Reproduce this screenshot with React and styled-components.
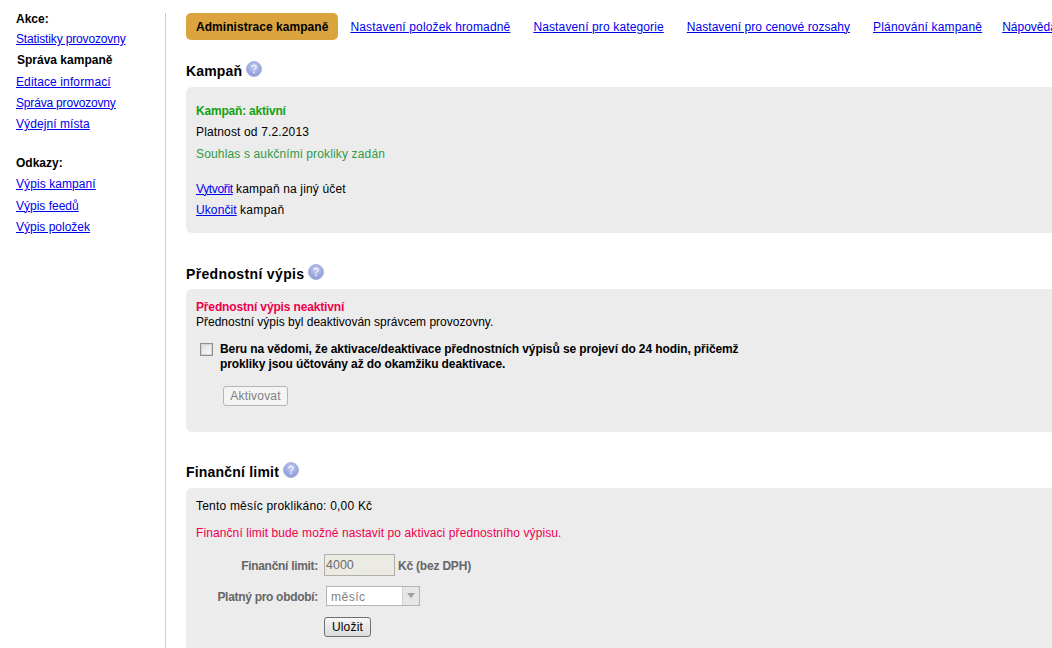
import React from "react";
import styled, { createGlobalStyle } from "styled-components";

const Global = createGlobalStyle`
  html, body { margin: 0; padding: 0; background: #fff; height: 648px; overflow: hidden; }
  body { font-family: "Liberation Sans", Arial, sans-serif; font-size: 12px; color: #000; }
  a { color: #0000ee; text-decoration: underline; }
`;

const track = (p) => `letter-spacing: ${p.$track || 0}px;`;

const Page = styled.div`
  display: flex;
  width: 1052px;
  height: 648px;
  overflow: hidden;
`;
const Sidebar = styled.aside`
  width: 149px;
  flex: none;
  margin-top: 13px;
  padding-left: 16px;
  border-right: 1px solid #f0c88c;
`;
const SideGroup = styled.div`
  margin-bottom: 22px;
`;
const SideTitle = styled.div`
  font-weight: bold;
  line-height: 21.2px;
  height: 21.2px;
  margin-top: ${(p) => p.$top || 0}px;
  margin-bottom: ${(p) => p.$bottom || 0}px;
  padding-left: ${(p) => (p.$current ? "1px" : "0")};
`;
const SideLink = styled.a`
  display: block;
  line-height: 21.2px;
  height: 21.2px;
  white-space: nowrap;
  width: max-content;
  ${track}
`;
const Main = styled.main`
  flex: 1;
  min-width: 0;
  padding: 13px 0 0 20px;
`;
const Tabs = styled.nav`
  display: flex;
  align-items: center;
  height: 27px;
  white-space: nowrap;
`;
const ActiveTab = styled.div`
  height: 27px;
  line-height: 28px;
  padding: 0 10px;
  background: #dba43f;
  border-radius: 5px;
  font-weight: bold;
  letter-spacing: 0.05px;
  margin-right: 12px;
`;
const Tab = styled.a`
  margin-right: ${(p) => p.$gap || 23}px;
  flex: none;
  ${track}
`;
const Heading = styled.h2`
  display: flex;
  align-items: center;
  gap: 4px;
  margin: ${(p) => p.$top} 0 ${(p) => p.$bottom};
  font-size: 14px;
  line-height: 18px;
  height: 18px;
  font-weight: bold;
  ${track}
`;
const Panel = styled.section`
  background: #ececec;
  border-radius: 6px 0 0 6px;
  height: ${(p) => p.$height};
  padding: ${(p) => p.$pad} 0 0 10px;
  box-sizing: border-box;
`;
const Line = styled.div`
  line-height: 21.5px;
  height: 21.5px;
  color: ${(p) => p.$color || "#000"};
  font-weight: ${(p) => (p.$bold ? "bold" : "normal")};
  margin-bottom: ${(p) => p.$after || 0};
  ${track}
`;
const InlineLink = styled.a`
  ${track}
`;
const InlineText = styled.span`
  ${track}
`;
const TightLine = styled.div`
  line-height: 15px;
  color: ${(p) => p.$color || "#000"};
  font-weight: ${(p) => (p.$bold ? "bold" : "normal")};
  ${track}
`;
const Consent = styled.label`
  display: flex;
  gap: 7px;
  margin: 12px 0 14px 4px;
  font-weight: bold;
  line-height: 15px;
  width: 560px;
  letter-spacing: -0.1px;
`;
const Check = styled.span`
  width: 11px;
  height: 11px;
  flex: none;
  margin-top: 1px;
  border: 1px solid #8e8f8f;
  background: linear-gradient(135deg, #dcdcdc, #fbfbfb);
  box-shadow: inset 0 0 0 1px #d4d4d4;
`;
const DisabledButton = styled.button`
  display: block;
  margin-left: 27px;
  width: 65px;
  height: 20px;
  padding: 0;
  font: 12px "Liberation Sans", Arial, sans-serif;
  letter-spacing: 0.2px;
  color: #808080;
  background: #f4f4f4;
  border: 1px solid #b5b5b5;
  border-radius: 3px;
`;
const FormRow = styled.div`
  display: flex;
  align-items: center;
  height: ${(p) => p.$height};
  color: #666;
  font-weight: bold;
`;
const FormLabel = styled.div`
  width: 122px;
  flex: none;
  text-align: right;
  margin-right: 6px;
  padding-top: 2px;
  letter-spacing: -0.3px;
`;
const Unit = styled.span`
  padding-top: 2px;
  letter-spacing: -0.2px;
`;
const TextBox = styled.div`
  width: 68px;
  height: 20px;
  line-height: 20px;
  padding-left: 1px;
  box-sizing: content-box;
  background: #ebebe4;
  border: 1px solid #b0b0a8;
  color: #6d6d6d;
  font-size: 12.5px;
  font-weight: normal;
  margin-right: 3px;
`;
const SelectBox = styled.div`
  display: flex;
  width: 92px;
  height: 18px;
  margin-left: 2px;
  border: 1px solid #b4b4b4;
  background: #fff;
  box-sizing: content-box;
  font-weight: normal;
  color: #808080;
  line-height: 20px;
`;
const SelectValue = styled.div`
  flex: 1;
  padding-left: 4px;
  letter-spacing: 0.5px;
`;
const SelectArrow = styled.div`
  width: 16px;
  background: #e6e6e6;
  border-left: 1px solid #cfcfcf;
  display: flex;
  align-items: center;
  justify-content: center;
`;
const SaveButton = styled.button`
  display: block;
  width: 47px;
  height: 20px;
  padding: 0;
  margin: 2px 0 0 128px;
  font: 12px "Liberation Sans", Arial, sans-serif;
  letter-spacing: 0.2px;
  color: #000;
  background: linear-gradient(#f6f6f6, #dcdcdc);
  border: 1px solid #707070;
  border-radius: 3px;
`;

function Help() {
  return (
    <svg width="16" height="16" viewBox="0 0 16 16" style={{ marginTop: -4 }}>
      <defs>
        <radialGradient id="hg" cx="50%" cy="35%" r="70%">
          <stop offset="0" stopColor="#c3cdf0" />
          <stop offset="1" stopColor="#8391d4" />
        </radialGradient>
      </defs>
      <circle cx="8" cy="8" r="7.5" fill="url(#hg)" stroke="#aab3de" strokeWidth="1" />
      <path d="M5.8 6.2c0-1.3 1-2 2.2-2s2.2.7 2.2 1.9c0 1.7-2.2 1.7-2.2 3.4" fill="none" stroke="#eef0fb" strokeWidth="1.4" />
      <rect x="7.2" y="10.6" width="1.6" height="1.6" fill="#eef0fb" />
    </svg>
  );
}

export default function App() {
  return (
    <Page>
      <Global />
      <Sidebar>
        <SideGroup>
          <SideTitle $top={-4} $bottom={-1}>Akce:</SideTitle>
          <SideLink href="#" $track={-0.15}>Statistiky provozovny</SideLink>
          <SideTitle $current>Správa kampaně</SideTitle>
          <SideLink href="#" $track={0.12}>Editace informací</SideLink>
          <SideLink href="#" $track={-0.18}>Správa provozovny</SideLink>
          <SideLink href="#" $track={0.08}>Výdejní místa</SideLink>
        </SideGroup>
        <SideGroup>
          <SideTitle $top={-4}>Odkazy:</SideTitle>
          <SideLink href="#" $track={0.08}>Výpis kampaní</SideLink>
          <SideLink href="#">Výpis feedů</SideLink>
          <SideLink href="#">Výpis položek</SideLink>
        </SideGroup>
      </Sidebar>
      <Main>
        <Tabs>
          <ActiveTab>Administrace kampaně</ActiveTab>
          <Tab href="#" $track={0.15}>Nastavení položek hromadně</Tab>
          <Tab href="#" $track={0.13}>Nastavení pro kategorie</Tab>
          <Tab href="#" $track={0.04}>Nastavení pro cenové rozsahy</Tab>
          <Tab href="#" $track={0.18} $gap={20}>Plánování kampaně</Tab>
          <Tab href="#">Nápověda</Tab>
        </Tabs>
        <Heading $top="22px" $bottom="7px" $track={0.15}>Kampaň <Help /></Heading>
        <Panel $height="146px" $pad="13.7px">
          <Line $bold $color="#13a10e" $track={-0.2}>Kampaň: aktivní</Line>
          <Line $track={0.15}>Platnost od 7.2.2013</Line>
          <Line $color="#2f9a4a" $after="13.4px" $track={0.15}>Souhlas s aukčními prokliky zadán</Line>
          <Line><InlineLink href="#" $track={-0.35}>Vytvořit</InlineLink> <InlineText $track={0.15}>kampaň na jiný účet</InlineText></Line>
          <Line><InlineLink href="#" $track={0.1}>Ukončit</InlineLink> <InlineText $track={0.3}>kampaň</InlineText></Line>
        </Panel>
        <Heading $top="32px" $bottom="6px" $track={0.35}>Přednostní výpis <Help /></Heading>
        <Panel $height="143px" $pad="11px">
          <TightLine $color="#f0004c" $bold $track={-0.15}>Přednostní výpis neaktivní</TightLine>
          <TightLine>Přednostní výpis byl deaktivován správcem provozovny.</TightLine>
          <Consent>
            <Check />
            <span>Beru na vědomi, že aktivace/deaktivace přednostních výpisů se projeví do 24 hodin, přičemž prokliky jsou účtovány až do okamžiku deaktivace.</span>
          </Consent>
          <DisabledButton disabled>Aktivovat</DisabledButton>
        </Panel>
        <Heading $top="31px" $bottom="7px" $track={0.2}>Finanční limit <Help /></Heading>
        <Panel $height="170px" $pad="8px">
          <Line $after="5.4px" $track={0.2}>Tento měsíc proklikáno: 0,00 Kč</Line>
          <Line $color="#f0004c" $after="8.6px" $track={0.1}>Finanční limit bude možné nastavit po aktivaci přednostního výpisu.</Line>
          <FormRow $height="24px">
            <FormLabel>Finanční limit:</FormLabel>
            <TextBox>4000</TextBox>
            <Unit>Kč (bez DPH)</Unit>
          </FormRow>
          <FormRow $height="38px">
            <FormLabel>Platný pro období:</FormLabel>
            <SelectBox>
              <SelectValue>měsíc</SelectValue>
              <SelectArrow>
                <svg width="8" height="5" viewBox="0 0 8 5"><path d="M0 0h8L4 5z" fill="#a0a0a0" /></svg>
              </SelectArrow>
            </SelectBox>
          </FormRow>
          <SaveButton>Uložit</SaveButton>
        </Panel>
      </Main>
    </Page>
  );
}
